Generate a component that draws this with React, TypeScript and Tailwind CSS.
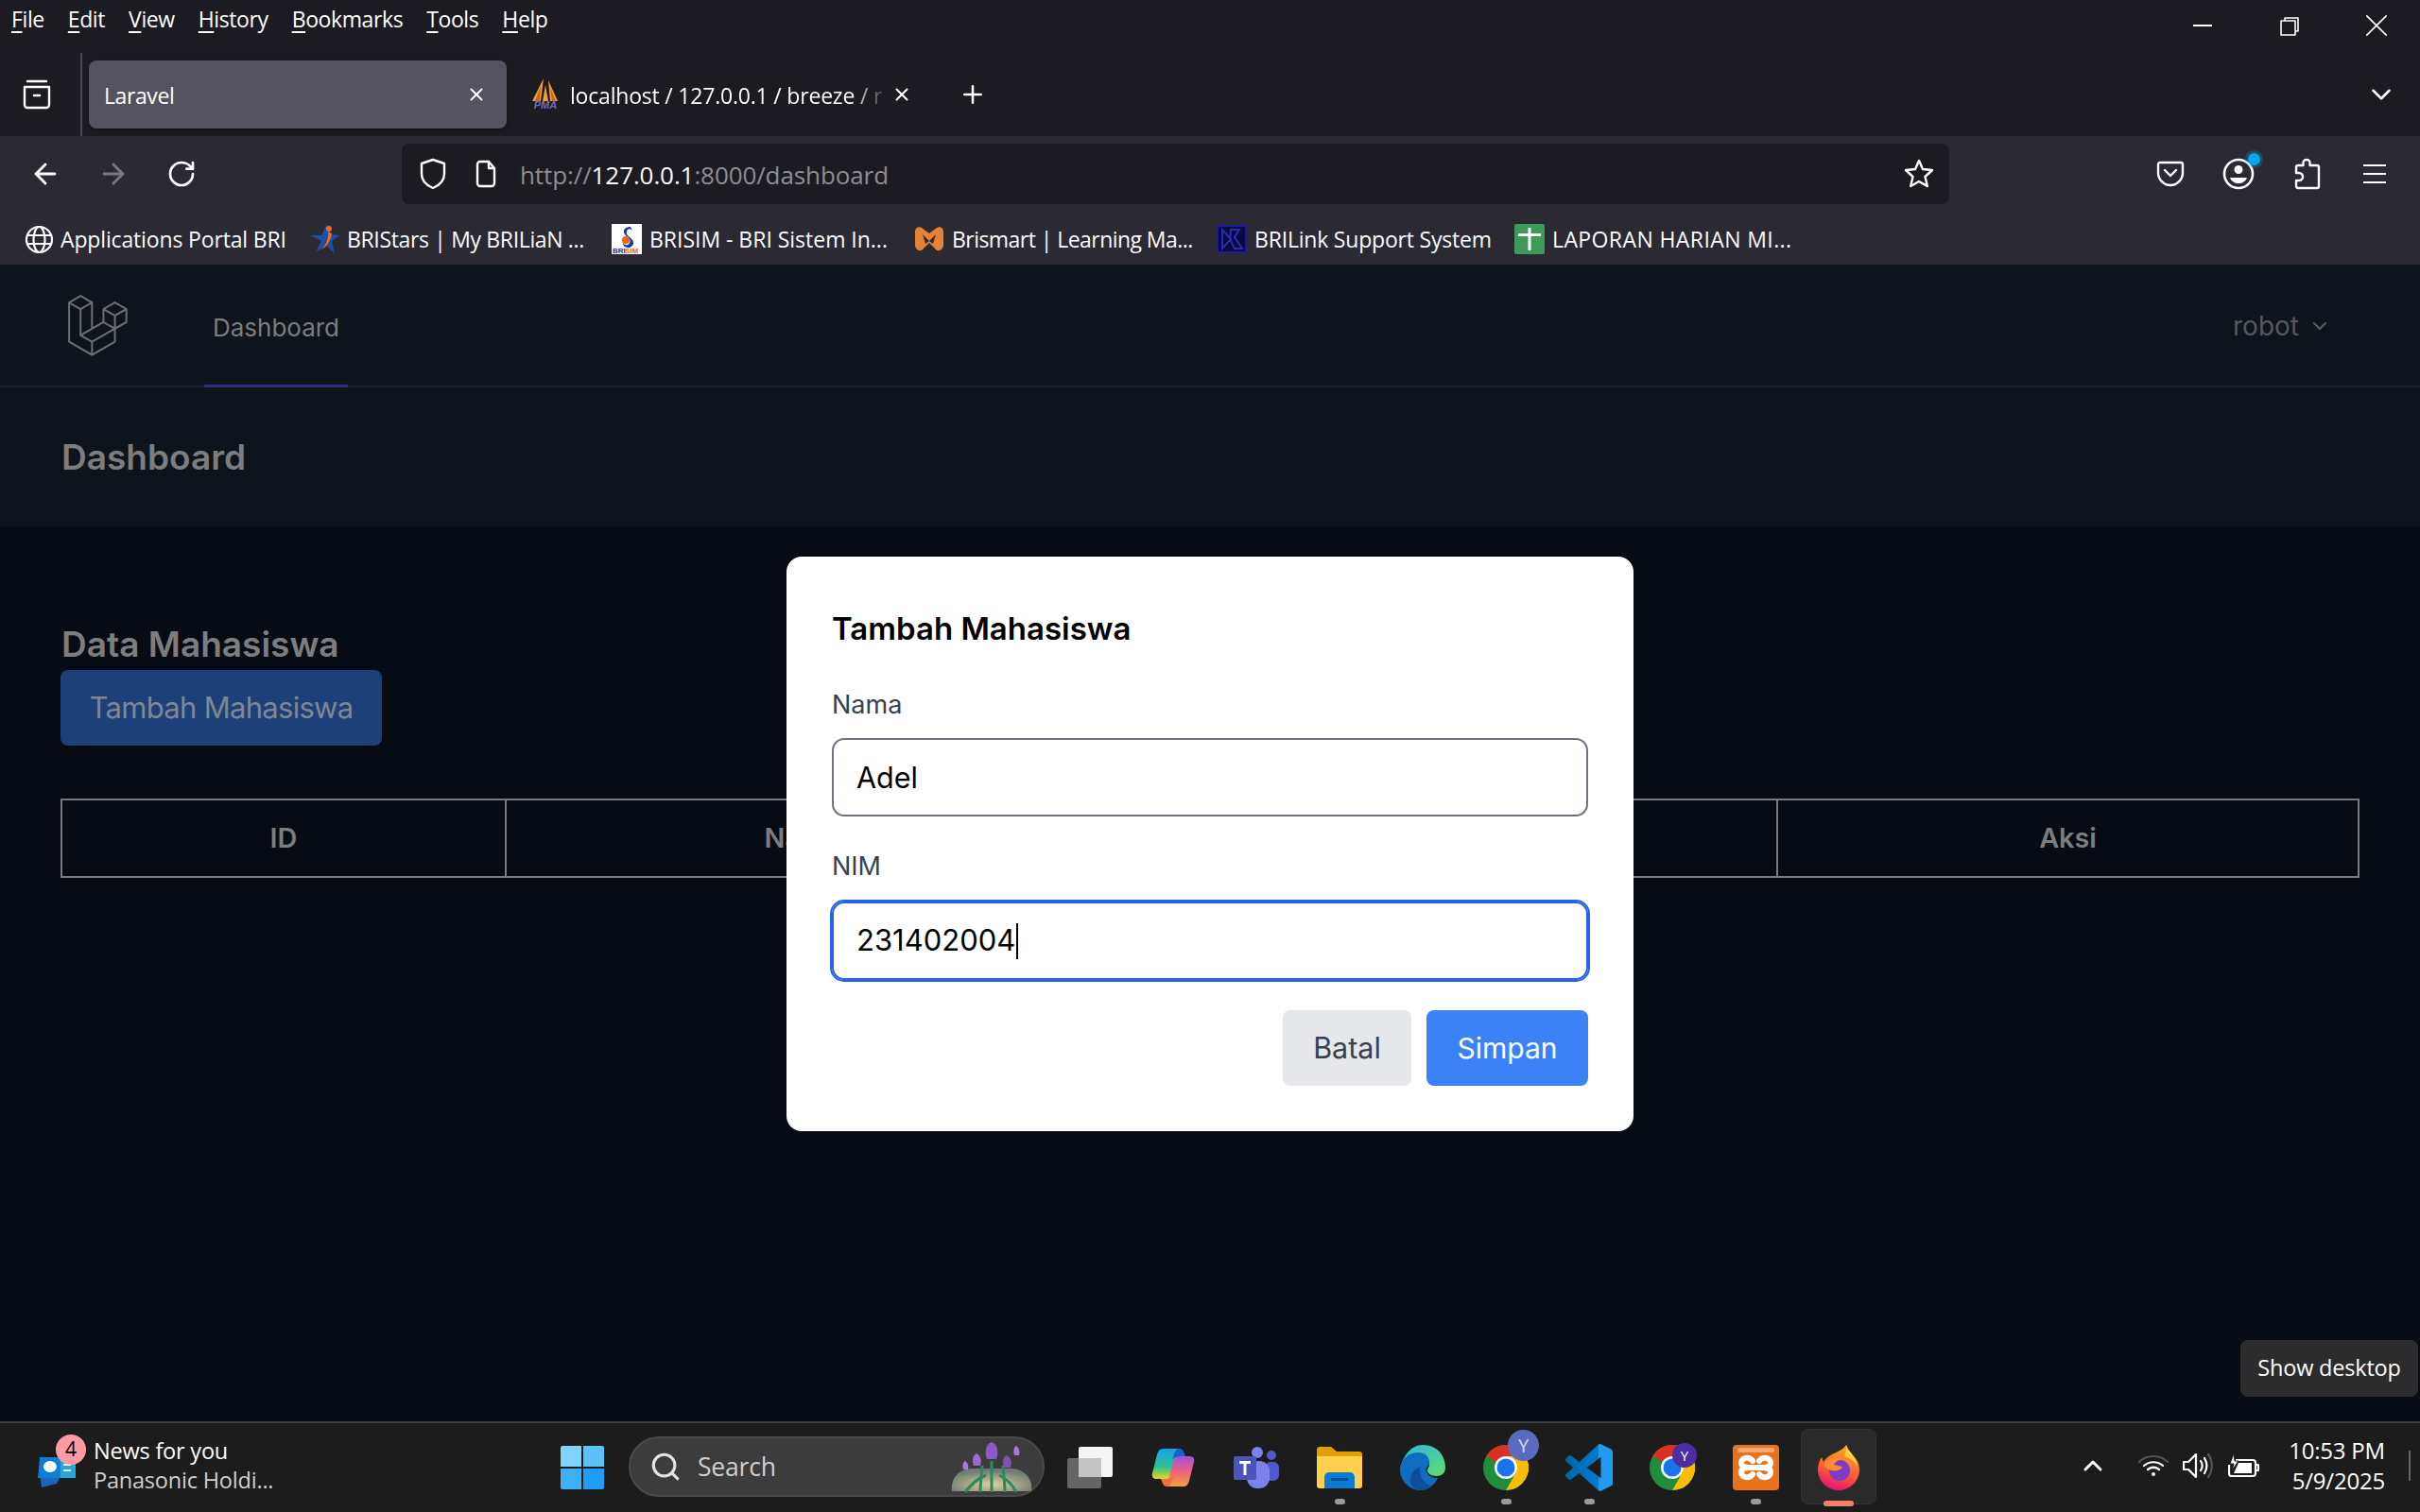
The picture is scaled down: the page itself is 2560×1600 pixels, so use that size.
import { ArrowLeft, ArrowRight, ChevronDown, ChevronUp, Plus, RotateCw, Search, X } from "lucide-react";
import type { ReactNode } from "react";

const LARAVEL =
  "M305.8 81.125C305.77 80.995 305.69 80.885 305.65 80.755C305.56 80.525 305.49 80.285 305.37 80.075C305.29 79.935 305.17 79.815 305.07 79.685C304.94 79.515 304.83 79.325 304.68 79.175C304.55 79.045 304.39 78.955 304.25 78.845C304.09 78.715 303.95 78.575 303.77 78.475L251.32 48.275C249.97 47.495 248.31 47.495 246.96 48.275L194.51 78.475C194.33 78.575 194.19 78.725 194.03 78.845C193.89 78.955 193.73 79.045 193.6 79.175C193.45 79.325 193.34 79.515 193.21 79.685C193.11 79.815 192.99 79.935 192.91 80.075C192.79 80.285 192.71 80.525 192.63 80.755C192.58 80.875 192.51 80.995 192.48 81.125C192.38 81.495 192.33 81.875 192.33 82.265V139.625L148.62 164.795V52.575C148.62 52.185 148.57 51.805 148.47 51.435C148.44 51.305 148.36 51.195 148.32 51.065C148.23 50.835 148.16 50.595 148.04 50.385C147.96 50.245 147.84 50.125 147.74 49.995C147.61 49.825 147.5 49.635 147.35 49.485C147.22 49.355 147.06 49.265 146.92 49.155C146.76 49.025 146.62 48.885 146.44 48.785L93.99 18.585C92.64 17.805 90.98 17.805 89.63 18.585L37.18 48.785C37 48.885 36.86 49.035 36.7 49.155C36.56 49.265 36.4 49.355 36.27 49.485C36.12 49.635 36.01 49.825 35.88 49.995C35.78 50.125 35.66 50.245 35.58 50.385C35.46 50.595 35.38 50.835 35.3 51.065C35.25 51.185 35.18 51.305 35.15 51.435C35.05 51.805 35 52.185 35 52.575V232.235C35 233.795 35.84 235.245 37.19 236.025L142.1 296.425C142.33 296.555 142.58 296.635 142.83 296.725C142.95 296.765 143.06 296.835 143.18 296.865C143.55 296.965 143.93 297.015 144.31 297.015C144.69 297.015 145.07 296.965 145.44 296.865C145.56 296.835 145.67 296.765 145.78 296.725C146.03 296.635 146.28 296.565 146.51 296.425L251.42 236.025C252.77 235.245 253.61 233.805 253.61 232.235V174.875L303.87 145.935C305.22 145.155 306.06 143.715 306.06 142.145V82.265C305.95 81.875 305.9 81.495 305.8 81.125ZM144.2 227.205L100.57 202.515L146.39 176.135L196.66 147.195L240.33 172.335L208.29 190.625L144.2 227.205ZM244.75 114.995V164.795L226.39 154.225L201.03 139.625V89.825L219.39 100.395L244.75 114.995ZM249.12 57.105L292.81 82.265L249.12 107.425L205.43 82.265L249.12 57.105ZM114.49 184.425L96.13 194.995V85.305L121.49 70.705L139.85 60.135V169.815L114.49 184.425ZM91.76 27.425L135.45 52.585L91.76 77.745L48.07 52.585L91.76 27.425ZM43.67 60.135L62.03 70.705L87.39 85.305V202.545C87.39 202.735 87.44 202.895 87.46 203.055C87.49 203.265 87.49 203.485 87.55 203.695C87.6 203.875 87.69 204.035 87.76 204.195C87.84 204.375 87.89 204.575 87.99 204.745C88.09 204.905 88.22 205.035 88.33 205.175C88.45 205.335 88.55 205.495 88.69 205.635C88.82 205.765 88.98 205.855 89.12 205.965C89.28 206.085 89.42 206.225 89.59 206.325L139.87 234.775V285.065L43.67 229.705V60.135ZM244.75 229.705L148.58 285.075V234.775L219.8 194.115L244.75 179.875V229.705ZM297.2 139.625L253.49 164.795V114.995L278.85 100.395L297.21 89.825V139.625H297.2Z";

const ui = "font-['Open_Sans',sans-serif]";
const web = "font-['Inter','Noto_Sans',sans-serif]";

function Line({ d, w = 30, h = 30, box = "0 0 24 24", sw = 2 }: { d: string; w?: number; h?: number; box?: string; sw?: number }) {
  return (
    <svg width={w} height={h} viewBox={box} fill="none" stroke="currentColor" strokeWidth={sw} strokeLinecap="round" strokeLinejoin="round">
      <path d={d} />
    </svg>
  );
}

function MenuBar() {
  const items = ["File", "Edit", "View", "History", "Bookmarks", "Tools", "Help"];
  return (
    <div className="flex h-14 items-start bg-[#1c1b22] pl-[12px] text-white">
      <div className="flex gap-[25px] pt-[4px] text-[23px] leading-[32px] tracking-[-0.4px]">
        {items.map((m) => (
          <span key={m}>
            <span className="underline underline-offset-[4px]">{m[0]}</span>
            {m.slice(1)}
          </span>
        ))}
      </div>
      <div className="ml-auto flex">
        <div className="flex h-14 w-[92px] items-start justify-center pt-[26px]">
          <div className="h-[2px] w-5 bg-white" />
        </div>
        <div className="flex h-14 w-[92px] items-start justify-center pt-[17px]">
          <Line w={22} h={22} box="0 0 22 22" sw={1.6} d="M6 5V2h14v14h-3M2 5h15v15H2z" />
        </div>
        <div className="flex h-14 w-[92px] items-start justify-center pt-[14px]">
          <Line w={26} h={26} box="0 0 28 28" sw={1.8} d="M3 3l22 22M25 3L3 25" />
        </div>
      </div>
    </div>
  );
}

function TabBar() {
  return (
    <div className="flex h-[88px] items-center bg-[#1c1b22] text-white">
      <div className="flex w-[82px] justify-center pr-[4px]">
        <Line w={32} h={32} box="0 0 32 32" sw={2.4} d="M6 2h20M3 8h26v19a3 3 0 0 1-3 3H6a3 3 0 0 1-3-3zM13 17h6" />
      </div>
      <div className="ml-[3px] h-full w-[2px] bg-[#4b4a52]" />
      <div className="ml-[7px] flex h-[72px] w-[442px] items-center rounded-[8px] bg-[#53525e] pl-[16px] pr-[21px] pt-[2px] shadow-[0_1px_3px_rgba(0,0,0,0.5)]">
        <span className="text-[23px] tracking-[-0.4px]">Laravel</span>
        <X className="ml-auto -mt-[2px]" size={22} strokeWidth={2.2} />
      </div>
      <div className="ml-[24px] flex w-[34px] justify-center">
        <svg width="34" height="34" viewBox="0 0 34 34">
          <path d="M15 0 3 24h9zM20 2l10 22h-8zM17 7l-3 17h6z" fill="#f0a030" />
          <path d="M12 8 6 24h5zM22 9l6 15h-4z" fill="#c9651e" />
          <text x="17" y="32" textAnchor="middle" fontSize="11" fontWeight="700" fontStyle="italic" fill="#6a6fb8" fontFamily="Liberation Sans">PMA</text>
        </svg>
      </div>
      <span className="ml-[9px] w-[337px] overflow-hidden whitespace-nowrap pt-[2px] text-[23px] tracking-[-0.2px] [mask-image:linear-gradient(to_right,black_88%,transparent)]">
        localhost / 127.0.0.1 / breeze / r
      </span>
      <X className="ml-[3px]" size={22} strokeWidth={2.2} />
      <Plus className="ml-[49px]" size={30} strokeWidth={2} />
      <ChevronDown className="ml-auto mr-[24px]" size={34} strokeWidth={1.8} />
    </div>
  );
}

function Toolbar() {
  return (
    <div className="flex h-20 items-center bg-[#2b2a33] pl-[12px] text-white">
      <div className="flex w-[72px] justify-center"><ArrowLeft size={34} strokeWidth={2} /></div>
      <div className="flex w-[72px] justify-center text-[#7a7980]"><ArrowRight size={34} strokeWidth={2} /></div>
      <div className="flex w-[72px] justify-center"><RotateCw size={32} strokeWidth={2} /></div>
      <div className="ml-[197px] flex h-16 w-[1637px] items-center rounded-[8px] bg-[#1c1b22] pl-[18px] pr-[15px]">
        <Line w={30} h={34} box="0 0 30 34" sw={2.4} d="M15 2l12 4v11c0 7-5 12-12 15C8 29 3 24 3 17V6z" />
        <div className="ml-[29px]">
          <Line w={24} h={30} box="0 0 24 30" sw={2.4} d="M3 5a3 3 0 0 1 3-3h9l6 7v16a3 3 0 0 1-3 3H6a3 3 0 0 1-3-3zM15 2v7h6" />
        </div>
        <span className="ml-[24px] pt-[2px] text-[26px] tracking-[-0.1px] text-[#8f8e94]">
          http://<span className="text-[#fbfbfe]">127.0.0.1</span>:8000/dashboard
        </span>
        <div className="ml-auto">
          <Line w={34} h={34} box="0 0 34 34" sw={2.4} d="M17 3l4 9 10 1-7.500 7 2.300 10L17 25l-8.800 5 2.300-10L3 13l10-1z" />
        </div>
      </div>
      <div className="ml-[198px] flex items-center">
        <div className="flex w-[72px] justify-center">
          <Line w={30} h={28} box="0 0 30 28" sw={2.4} d="M4 2h22a2 2 0 0 1 2 2v9c0 7-6 13-13 13S2 20 2 13V4a2 2 0 0 1 2-2zM9 10l6 6 6-6" />
        </div>
        <div className="relative flex w-[72px] justify-center">
          <svg width="34" height="34" viewBox="0 0 34 34">
            <circle cx="17" cy="17" r="15" fill="none" stroke="#fff" strokeWidth="2.600" />
            <circle cx="17" cy="12.500" r="4.500" fill="#fff" />
            <path d="M8 21h18c-1.500 4-5 6-9 6s-7.500-2-9-6z" fill="#fff" />
          </svg>
          <div className="absolute left-[46px] top-[-5px] h-[13px] w-[13px] rounded-full bg-[#00a6f0] shadow-[0_0_0_3px_rgba(0,166,240,0.25)]" />
        </div>
        <div className="flex w-[72px] justify-center">
          <Line w={30} h={34} box="0 0 30 34" sw={2.400} d="M15 2c3 0 4 2 3.500 6H26a2 2 0 0 1 2 2v20a2 2 0 0 1-2 2H6a2 2 0 0 1-2-2v-6h3a4 4 0 0 0 0-8H4v-6a2 2 0 0 1 2-2h5.500C11 4 12 2 15 2z" />
        </div>
        <div className="flex w-[72px] flex-col items-center gap-[6.500px]">
          <div className="h-[2.500px] w-6 bg-white" />
          <div className="h-[2.500px] w-6 bg-white" />
          <div className="h-[2.500px] w-6 bg-white" />
        </div>
      </div>
    </div>
  );
}

function Mark({ children }: { children: ReactNode }) {
  return <div className="flex h-8 w-8 shrink-0 items-center justify-center">{children}</div>;
}

function Bookmarks() {
  return (
    <div className="flex h-14 items-center bg-[#2b2a33] pl-[25px] pt-[2px] text-[23px] text-[#fbfbfe]">
      <div className="flex w-[303px] items-center gap-[7px]">
        <Mark>
          <svg width="31" height="31" viewBox="0 0 31 31" fill="none" stroke="#fff" strokeWidth="2.200">
            <circle cx="15.500" cy="15.500" r="13.500" />
            <ellipse cx="15.500" cy="15.500" rx="6" ry="13.500" />
            <path d="M2 11h27M2 20h27" />
          </svg>
        </Mark>
        <span className="tracking-[-0.15px]">Applications Portal BRI</span>
      </div>
      <div className="flex w-[319px] items-center gap-[7px]">
        <Mark>
          <svg width="32" height="32" viewBox="0 0 32 32">
            <path d="M18 0l3 11 10 1-8 6 3 13-9-8-11 7 6-12-12-6 12 0z" fill="#1c4fa0" />
            <path d="M19 8c1 8-3 16-8 20 6-3 11-10 12-18z" fill="#ef6c1a" />
            <circle cx="20" cy="5" r="3" fill="#ef6c1a" />
          </svg>
        </Mark>
        <span className="tracking-[-0.35px]">BRIStars | My BRILiaN ...</span>
      </div>
      <div className="flex w-[320px] items-center gap-[8px]">
        <Mark>
          <svg width="32" height="32" viewBox="0 0 32 32">
            <rect width="32" height="32" fill="#fff" />
            <path d="M20 3c-6 0-9 4-6 8s7 5 5 9-6 2-7 0c0 4 3 5 6 5s7-4 4-8-7-5-6-9 4-3 6-1z" fill="#12408f" />
            <circle cx="15" cy="17" r="4" fill="#e8651a" />
            <text x="1" y="31" fontSize="8" fontWeight="700" fill="#12408f" fontFamily="Liberation Sans">BRI</text>
            <text x="14" y="31" fontSize="8" fontWeight="700" fill="#e8651a" fontFamily="Liberation Sans">SIM</text>
          </svg>
        </Mark>
        <span className="tracking-[-0.02px]">BRISIM - BRI Sistem In...</span>
      </div>
      <div className="flex w-[320px] items-center gap-[8px]">
        <Mark>
          <svg width="32" height="28" viewBox="0 0 32 28">
            <path d="M1 6c0-4 4-6 7-4l8 6 8-6c3-2 7 0 7 4v14c0 5-5 8-8 5l-7-7-7 7c-3 3-8 0-8-5z" fill="#e98135" />
            <path d="M9 9l7 7 7-7-3 10-4-3-4 3z" fill="#2b2a33" />
          </svg>
        </Mark>
        <span className="tracking-[-0.55px]">Brismart | Learning Ma...</span>
      </div>
      <div className="flex w-[315px] items-center gap-[8px]">
        <Mark>
          <svg width="32" height="30" viewBox="0 0 32 30" fill="none">
            <rect x="1" y="1" width="30" height="28" fill="#0a0a3c" stroke="#1b1b9a" strokeWidth="2" />
            <path d="M6 5v20l9-10zM15 5h9l-5 8 8 12h-8l-5-10z" stroke="#2a2ab8" strokeWidth="2" />
          </svg>
        </Mark>
        <span className="tracking-[-0.2px]">BRILink Support System</span>
      </div>
      <div className="flex items-center gap-[8px]">
        <Mark>
          <svg width="32" height="32" viewBox="0 0 32 32">
            <rect width="32" height="32" rx="2" fill="#3d9a58" />
            <path d="M14.500 4h3v6H28v3H17.500v15h-3V13H4v-3h10.500z" fill="#fff" />
          </svg>
        </Mark>
        <span className="tracking-[0.4px]">LAPORAN HARIAN MI...</span>
      </div>
    </div>
  );
}

function Nav() {
  return (
    <div className="flex h-[130px] border-b-2 border-[#1b1f2a] bg-[#0e141c] pl-[64px] pr-[94px]">
      <div className="pt-[28px]">
        <svg width="73" height="73" viewBox="0 0 316 316" fill="#6e6e6e">
          <path d={LARAVEL} />
        </svg>
      </div>
      <div className="ml-[79px] flex h-[130px] w-[152px] items-center justify-center border-b-[3px] border-[#312e81] pt-[6px] text-[26px] text-[#7d7d7d]">
        Dashboard
      </div>
      <div className="ml-auto flex items-center gap-[10px] pt-[2px] text-[28px] text-[#55585d]">
        robot
        <ChevronDown size={24} strokeWidth={2.400} />
      </div>
    </div>
  );
}

function Dashboard() {
  const cols = [
    { name: "ID", cls: "w-[470px]" },
    { name: "Nama", cls: "w-[628px]" },
    { name: "NIM", cls: "w-[717px]" },
    { name: "Aksi", cls: "w-[615px]" },
  ];
  return (
    <>
      <div className="flex h-[147px] items-center bg-[#0e141c] pl-[65px]">
        <h1 className="text-[37px] font-semibold text-[#7d7d7d]">Dashboard</h1>
      </div>
      <div className="flex-1 bg-[#070c14] px-[64px] pt-[98px]">
        <h2 className="h-[54px] pl-px text-[37px] font-semibold leading-[53px] text-[#7d7d7d]">Data Mahasiswa</h2>
        <button className="h-20 w-[340px] rounded-[8px] bg-[#1e4079] text-center text-[31px] tracking-[-0.7px] text-[#7f8791]">Tambah Mahasiswa</button>
        <table className="mt-14 w-[2430px] table-fixed border-collapse">
          <thead>
            <tr>
              {cols.map((c) => (
                <th key={c.name} className={`${c.cls} h-[82px] border-2 border-[#7a7a7a] text-[28.800px] font-semibold text-[#7d7d7d]`}>
                  {c.name}
                </th>
              ))}
            </tr>
          </thead>
        </table>
      </div>
    </>
  );
}

function Modal() {
  return (
    <div className="absolute left-[832px] top-[589px] h-[608px] w-[896px] rounded-[16px] bg-white p-12">
      <h3 className="h-[52px] text-[33px] font-semibold leading-[56px] text-black">Tambah Mahasiswa</h3>
      <label className="mt-[39px] block h-[36px] text-[27px] leading-[36px] text-[#374151]">Nama</label>
      <div className="mt-[17px] flex h-[83px] items-center rounded-[13px] border-2 border-[#6b7280] pl-[24px] text-[30.500px] text-black">Adel</div>
      <label className="mt-[35px] block h-[36px] text-[27px] leading-[36px] text-[#374151]">NIM</label>
      <div className="mt-[19px] flex h-[83px] items-center rounded-[13px] border-2 border-[#2563eb] pl-[24px] text-[31px] text-black shadow-[0_0_0_2px_#2563eb]">
        231402004
        <span className="ml-px h-[38px] w-[2px] bg-black" />
      </div>
      <div className="mt-[32px] flex justify-end gap-4">
        <button className="h-20 w-[136px] rounded-[8px] bg-[#e5e7eb] text-[30.500px] text-[#374151]">Batal</button>
        <button className="h-20 w-[171px] rounded-[8px] bg-[#3b82f6] text-[30px] text-white">Simpan</button>
      </div>
    </div>
  );
}

function Slot({ children, dot }: { children: ReactNode; dot?: boolean }) {
  return (
    <div className="relative flex h-[96px] w-[88px] items-center justify-center pb-[2px]">
      {children}
      {dot && <div className="absolute bottom-[10px] h-[6px] w-[11px] rounded-full bg-[#9a9a9a]" />}
    </div>
  );
}

function Chrome({ badge, big }: { badge?: boolean; big?: boolean }) {
  return (
    <div className="relative">
      <svg width="48" height="48" viewBox="0 0 48 48">
        <circle cx="24" cy="24" r="24" fill="#1e8e3e" />
        <path d="M24 0a24 24 0 0 1 20.800 12H24a12 12 0 0 0-10.400 6L3.200 12A24 24 0 0 1 24 0z" fill="#d93025" />
        <path d="M44.800 12A24 24 0 0 1 24 48l10.400-18a12 12 0 0 0-1-12l-9.400-6z" fill="#fbbc04" />
        <circle cx="24" cy="24" r="12" fill="#fff" />
        <circle cx="24" cy="24" r="9.500" fill="#1a73e8" />
      </svg>
      {big ? (
        <div className="absolute left-[26px] top-[-16px] flex h-[33px] w-[33px] items-center justify-center rounded-full bg-[#5a6bbf] text-[20px] text-[#d8dcf0]">Y</div>
      ) : (
        badge && <div className="absolute left-[24px] top-[-2px] flex h-[26px] w-[26px] items-center justify-center rounded-full bg-[#4b2fa0] text-[15px] text-white">Y</div>
      )}
    </div>
  );
}

function Taskbar() {
  return (
    <div className={`${ui} flex h-24 border-t-2 border-[#3f3f3f] bg-[#1c1c1c] text-white`}>
      <div className="relative flex w-[572px] items-center pl-[38px]">
        <svg width="44" height="40" viewBox="0 0 44 40" className="mt-[2px]">
          <path d="M4 24l24 0-6 12-16 4z" fill="#1b66b8" />
          <path d="M4 8h38v22H2z" fill="#0f7cd6" />
          <path d="M26 8h16v22H26z" fill="#27a6d8" />
          <ellipse cx="15" cy="18" rx="7" ry="6" fill="#fff" />
          <path d="M29 15h8v2h-8zM29 21h8v2h-8z" fill="#e8f4fb" />
        </svg>
        <div className="absolute left-[59px] top-[12px] flex h-[32px] w-[32px] items-center justify-center rounded-full bg-[#ff9aa2] text-[21px] text-black">4</div>
        <div className="ml-[17px] flex flex-col pb-[4px] text-[23.500px] leading-[31px] tracking-[-0.2px]">
          <span>News for you</span>
          <span className="text-[#cfcfcf]">Panasonic Holdi...</span>
        </div>
      </div>
      <Slot>
        <div className="grid h-[46px] w-[46px] grid-cols-2 gap-[2px]">
          <div className="rounded-tl-[2px] bg-[#7fd4fb]" />
          <div className="rounded-tr-[2px] bg-[#5bc2f8]" />
          <div className="rounded-bl-[2px] bg-[#3db0f7]" />
          <div className="rounded-br-[2px] bg-[#1f9cf5]" />
        </div>
      </Slot>
      <div className="ml-[5px] mt-[14px] flex h-16 w-[440px] items-center rounded-full border-2 border-[#4a4a4a] bg-[#3c3c3c] pl-[20px] pr-[8px]">
        <Search size={34} strokeWidth={2.200} className="text-[#e4e4e4]" />
        <span className="ml-[17px] pt-[2px] text-[26.500px] tracking-[-0.2px] text-[#cfcfcf]">Search</span>
        <svg width="92" height="56" viewBox="0 0 92 56" className="ml-auto">
          <defs>
            <radialGradient id="fl" cx="0.5" cy="0.7" r="0.6">
              <stop offset="0" stopColor="#e0d09a" />
              <stop offset="1" stopColor="#6f7d74" />
            </radialGradient>
          </defs>
          <path d="M4 54C2 38 14 30 26 30h40c14 0 24 10 22 24z" fill="url(#fl)" />
          <path d="M18 55c6-8 12-14 22-18M72 55c-4-8-10-14-18-18M46 55V22M34 55c0-12 2-22 2-28M60 55c0-12-2-22-2-28" stroke="#2d8a5c" strokeWidth="3" fill="none" />
          <path d="M46 2c6 2 8 10 5 18h-10C38 12 40 4 46 2z" fill="#8a5cc8" />
          <path d="M30 14c4 2 6 7 4 13h-7c-2-6-1-11 3-13z" fill="#9a6cd0" />
          <path d="M62 16c4 2 6 7 4 13h-7c-2-6-1-11 3-13z" fill="#7e50b8" />
          <path d="M72 6c3 2 4 6 3 10h-5c-1-4-1-8 2-10z" fill="#a77cd8" />
          <path d="M18 22c3 2 4 5 3 9h-5c-1-4-1-7 2-9z" fill="#a77cd8" />
        </svg>
      </div>
      <div className="ml-[4px] flex">
        <Slot>
          <svg width="48" height="44" viewBox="0 0 48 44">
            <rect x="0" y="12" width="36" height="32" rx="2" fill="#666" />
            <rect x="12" y="0" width="36" height="32" rx="2" fill="#f4f4f4" />
            <rect x="12" y="12" width="24" height="20" fill="#c4c4c4" />
          </svg>
        </Slot>
        <Slot>
          <svg width="46" height="44" viewBox="0 0 46 44">
            <defs>
              <linearGradient id="cpa" x1="0" y1="0" x2="0" y2="1">
                <stop offset="0" stopColor="#18a0f0" />
                <stop offset="0.6" stopColor="#30c090" />
                <stop offset="1" stopColor="#e8d820" />
              </linearGradient>
              <linearGradient id="cpb" x1="0" y1="0" x2="0" y2="1">
                <stop offset="0" stopColor="#a050e0" />
                <stop offset="0.5" stopColor="#f06080" />
                <stop offset="1" stopColor="#f8a040" />
              </linearGradient>
            </defs>
            <path d="M12 2h18l-8 28a6 6 0 0 1-6 4H6c-4 0-6-2-5-6l5-20c1-4 3-6 6-6z" fill="url(#cpa)" />
            <path d="M34 42H16l8-28a6 6 0 0 1 6-4h10c4 0 6 2 5 6l-5 20c-1 4-3 6-6 6z" fill="url(#cpb)" />
            <path d="M30 2c-3 0-5 2-6 6l-2 6c2-2 4-4 8-4h6l-2-5c-1-2-2-3-4-3z" fill="#1860d0" />
            <path d="M16 42c3 0 5-2 6-6l2-6c-2 2-4 4-8 4h-6l2 5c1 2 2 3 4 3z" fill="#f07040" />
          </svg>
        </Slot>
        <Slot>
          <svg width="48" height="44" viewBox="0 0 48 44">
            <circle cx="25" cy="6" r="6" fill="#7b83eb" />
            <circle cx="40" cy="9" r="5" fill="#5059c9" />
            <rect x="33" y="16" width="15" height="20" rx="6" fill="#5059c9" />
            <rect x="14" y="15" width="24" height="29" rx="11" fill="#7b83eb" />
            <rect x="0" y="10" width="24" height="25" rx="2" fill="#4b53bc" />
            <path d="M6 15h12v3h-4.500v12h-3V18H6z" fill="#fff" />
          </svg>
        </Slot>
        <Slot dot>
          <svg width="48" height="44" viewBox="0 0 48 44">
            <path d="M0 3a3 3 0 0 1 3-3h12l6 5h24a3 3 0 0 1 3 3v6H0z" fill="#e0a000" />
            <path d="M0 10h48v31a3 3 0 0 1-3 3H3a3 3 0 0 1-3-3z" fill="#ffcf4d" />
            <path d="M8 44V32a5 5 0 0 1 5-5h22a5 5 0 0 1 5 5v12z" fill="#0a7bd0" />
            <rect x="15" y="33" width="18" height="3" fill="#064f94" />
          </svg>
        </Slot>
        <Slot>
          <svg width="48" height="48" viewBox="0 0 48 48">
            <defs>
              <linearGradient id="edg" x1="0" y1="0" x2="1" y2="1">
                <stop offset="0" stopColor="#2bb8e0" />
                <stop offset="1" stopColor="#5fdc70" />
              </linearGradient>
            </defs>
            <path d="M24 0c14 0 24 10 24 24 0 6-4 9-9 9-6 0-10-3-10-6 0-2 2-3 2-7 0-6-6-10-14-9-9 1-15 8-17 15C3 11 12 0 24 0z" fill="url(#edg)" />
            <path d="M0 26C1 14 10 8 19 8c7 0 12 4 12 10 0 3-2 4-3 6-2 5 3 11 12 11-4 8-11 13-18 13C10 48 0 38 0 26z" fill="#0f6cc0" />
            <path d="M21 27c0 8 5 14 12 16-3 3-7 5-11 5-6 0-11-4-11-11 0-6 4-11 10-14z" fill="#0c4f98" />
          </svg>
        </Slot>
        <Slot dot>
          <Chrome big />
        </Slot>
        <Slot dot>
          <svg width="50" height="50" viewBox="0 0 24 24">
            <defs>
              <linearGradient id="vsc" x1="0" y1="0" x2="1" y2="0">
                <stop offset="0" stopColor="#0065a9" />
                <stop offset="0.7" stopColor="#007acc" />
                <stop offset="0.7" stopColor="#1f9cf0" />
                <stop offset="1" stopColor="#1f9cf0" />
              </linearGradient>
            </defs>
            <path
              d="M23.150 2.587L18.210.210a1.494 1.494 0 0 0-1.705.290l-9.460 8.630-4.120-3.128a.999.999 0 0 0-1.276.057L.327 7.261A1 1 0 0 0 .326 8.740L3.899 12 .326 15.260a1 1 0 0 0 .001 1.479L1.650 17.940a.999.999 0 0 0 1.276.057l4.120-3.128 9.460 8.630a1.492 1.492 0 0 0 1.704.290l4.942-2.377A1.500 1.500 0 0 0 24 20.060V3.939a1.500 1.500 0 0 0-.850-1.352zm-5.146 14.861L10.826 12l7.178-5.448v10.896z"
              fill="url(#vsc)"
            />
          </svg>
        </Slot>
        <Slot>
          <Chrome badge />
        </Slot>
        <Slot dot>
          <svg width="49" height="48" viewBox="0 0 49 48" fill="none">
            <rect width="49" height="48" rx="4" fill="#e8731a" />
            <rect x="5" y="3" width="39" height="5" rx="2.500" fill="#f4a878" />
            <path d="M21 17c-3-5-12-4-12 2 0 4 5 5 9 5-4 0-9 1-9 5 0 6 9 7 12 2M28 17c3-5 12-4 12 2 0 4-5 5-9 5 4 0 9 1 9 5 0 6-9 7-12 2M18 24h13" stroke="#fff" strokeWidth="6" strokeLinecap="round" strokeLinejoin="round" />
          </svg>
        </Slot>
        <Slot>
          <div className="absolute left-[4px] top-[6px] h-20 w-20 rounded-[8px] border border-[#333] bg-[#2a2a2a]" />
          <svg width="44" height="48" viewBox="0 0 44 48" className="relative">
            <defs>
              <linearGradient id="ffx" x1="0.700" y1="0" x2="0.400" y2="1">
                <stop offset="0" stopColor="#ffb020" />
                <stop offset="0.600" stopColor="#ff5a30" />
                <stop offset="1" stopColor="#e8107a" />
              </linearGradient>
            </defs>
            <path d="M30 0c1 5 5 8 9 13 4 5 5 10 5 13 0 12-10 22-22 22S0 38 0 26c0-5 2-10 4-13l2 5c2-4 6-6 9-8 6-3 12-5 15-10z" fill="url(#ffx)" />
            <circle cx="23" cy="27" r="11" fill="#7a3dc8" />
            <path d="M6 20c4-6 14-8 20-4-5 0-8 2-9 5 3 1 8 1 9 3-2 3-8 4-12 3-4-1-7-3-8-7z" fill="#ff8a30" />
            <path d="M30 0c3 8 10 12 12 22-4-6-9-8-14-10 2-4 2-8 2-12z" fill="#ffd040" />
          </svg>
          <div className="absolute bottom-[8px] h-[6px] w-8 rounded-full bg-[#f0806c]" />
        </Slot>
      </div>
      <div className="ml-[209px] flex items-center pb-[4px]">
        <ChevronUp size={32} strokeWidth={2.200} />
        <div className="ml-[31px]">
          <svg width="34" height="26" viewBox="0 0 34 26" fill="none" stroke="#fff" strokeWidth="2.200" strokeLinecap="round">
            <path d="M2 9C10 1 24 1 32 9" stroke="#555" />
            <path d="M7 13c6-5 14-5 20 0M11 17c4-3 8-3 12 0" />
            <circle cx="17" cy="22" r="2" fill="#fff" stroke="none" />
          </svg>
        </div>
        <div className="ml-[14px]">
          <svg width="32" height="30" viewBox="0 0 32 30" fill="none" stroke="#fff" strokeWidth="2.200" strokeLinecap="round" strokeLinejoin="round">
            <path d="M1 11h5l8-8v24l-8-8H1zM19 10c2 3 2 7 0 10M23 7c3 5 3 11 0 16" />
            <path d="M27 3c5 7 5 17 0 24" stroke="#555" />
          </svg>
        </div>
        <div className="ml-[16px]">
          <svg width="33" height="28" viewBox="0 0 33 28" fill="none" stroke="#fff" strokeWidth="2.200" strokeLinejoin="round">
            <path d="M8 8h18a3 3 0 0 1 3 3v11a3 3 0 0 1-3 3H4a3 3 0 0 1-3-3V13M29 13h3v6h-3" />
            <path d="M11 11h14v11H6z" fill="#fff" stroke="none" />
            <path d="M6 1 2 12h4l-2 7 7-10H7z" fill="#fff" stroke="#1c1c1c" strokeWidth="1" />
          </svg>
        </div>
        <div className="ml-[29px] flex w-[104px] flex-col items-end text-[24px] leading-[32px] tracking-[-0.2px]">
          <span>10:53 PM</span>
          <span>5/9/2025</span>
        </div>
        <div className="ml-[25px] h-8 w-[2px] bg-[#666]" />
      </div>
    </div>
  );
}

export default function App() {
  return (
    <div className={`${web} relative flex h-[1600px] w-[2560px] flex-col overflow-hidden`}>
      <div className={`${ui} flex flex-col`}>
        <MenuBar />
        <TabBar />
        <Toolbar />
        <Bookmarks />
      </div>
      <Nav />
      <Dashboard />
      <Taskbar />
      <Modal />
      <div className={`${ui} absolute left-[2370px] top-[1418px] flex h-[60px] w-[188px] items-center justify-center rounded-[8px] bg-[#2c2c2c] text-[23.500px] tracking-[-0.2px] text-white`}>
        Show desktop
      </div>
    </div>
  );
}
